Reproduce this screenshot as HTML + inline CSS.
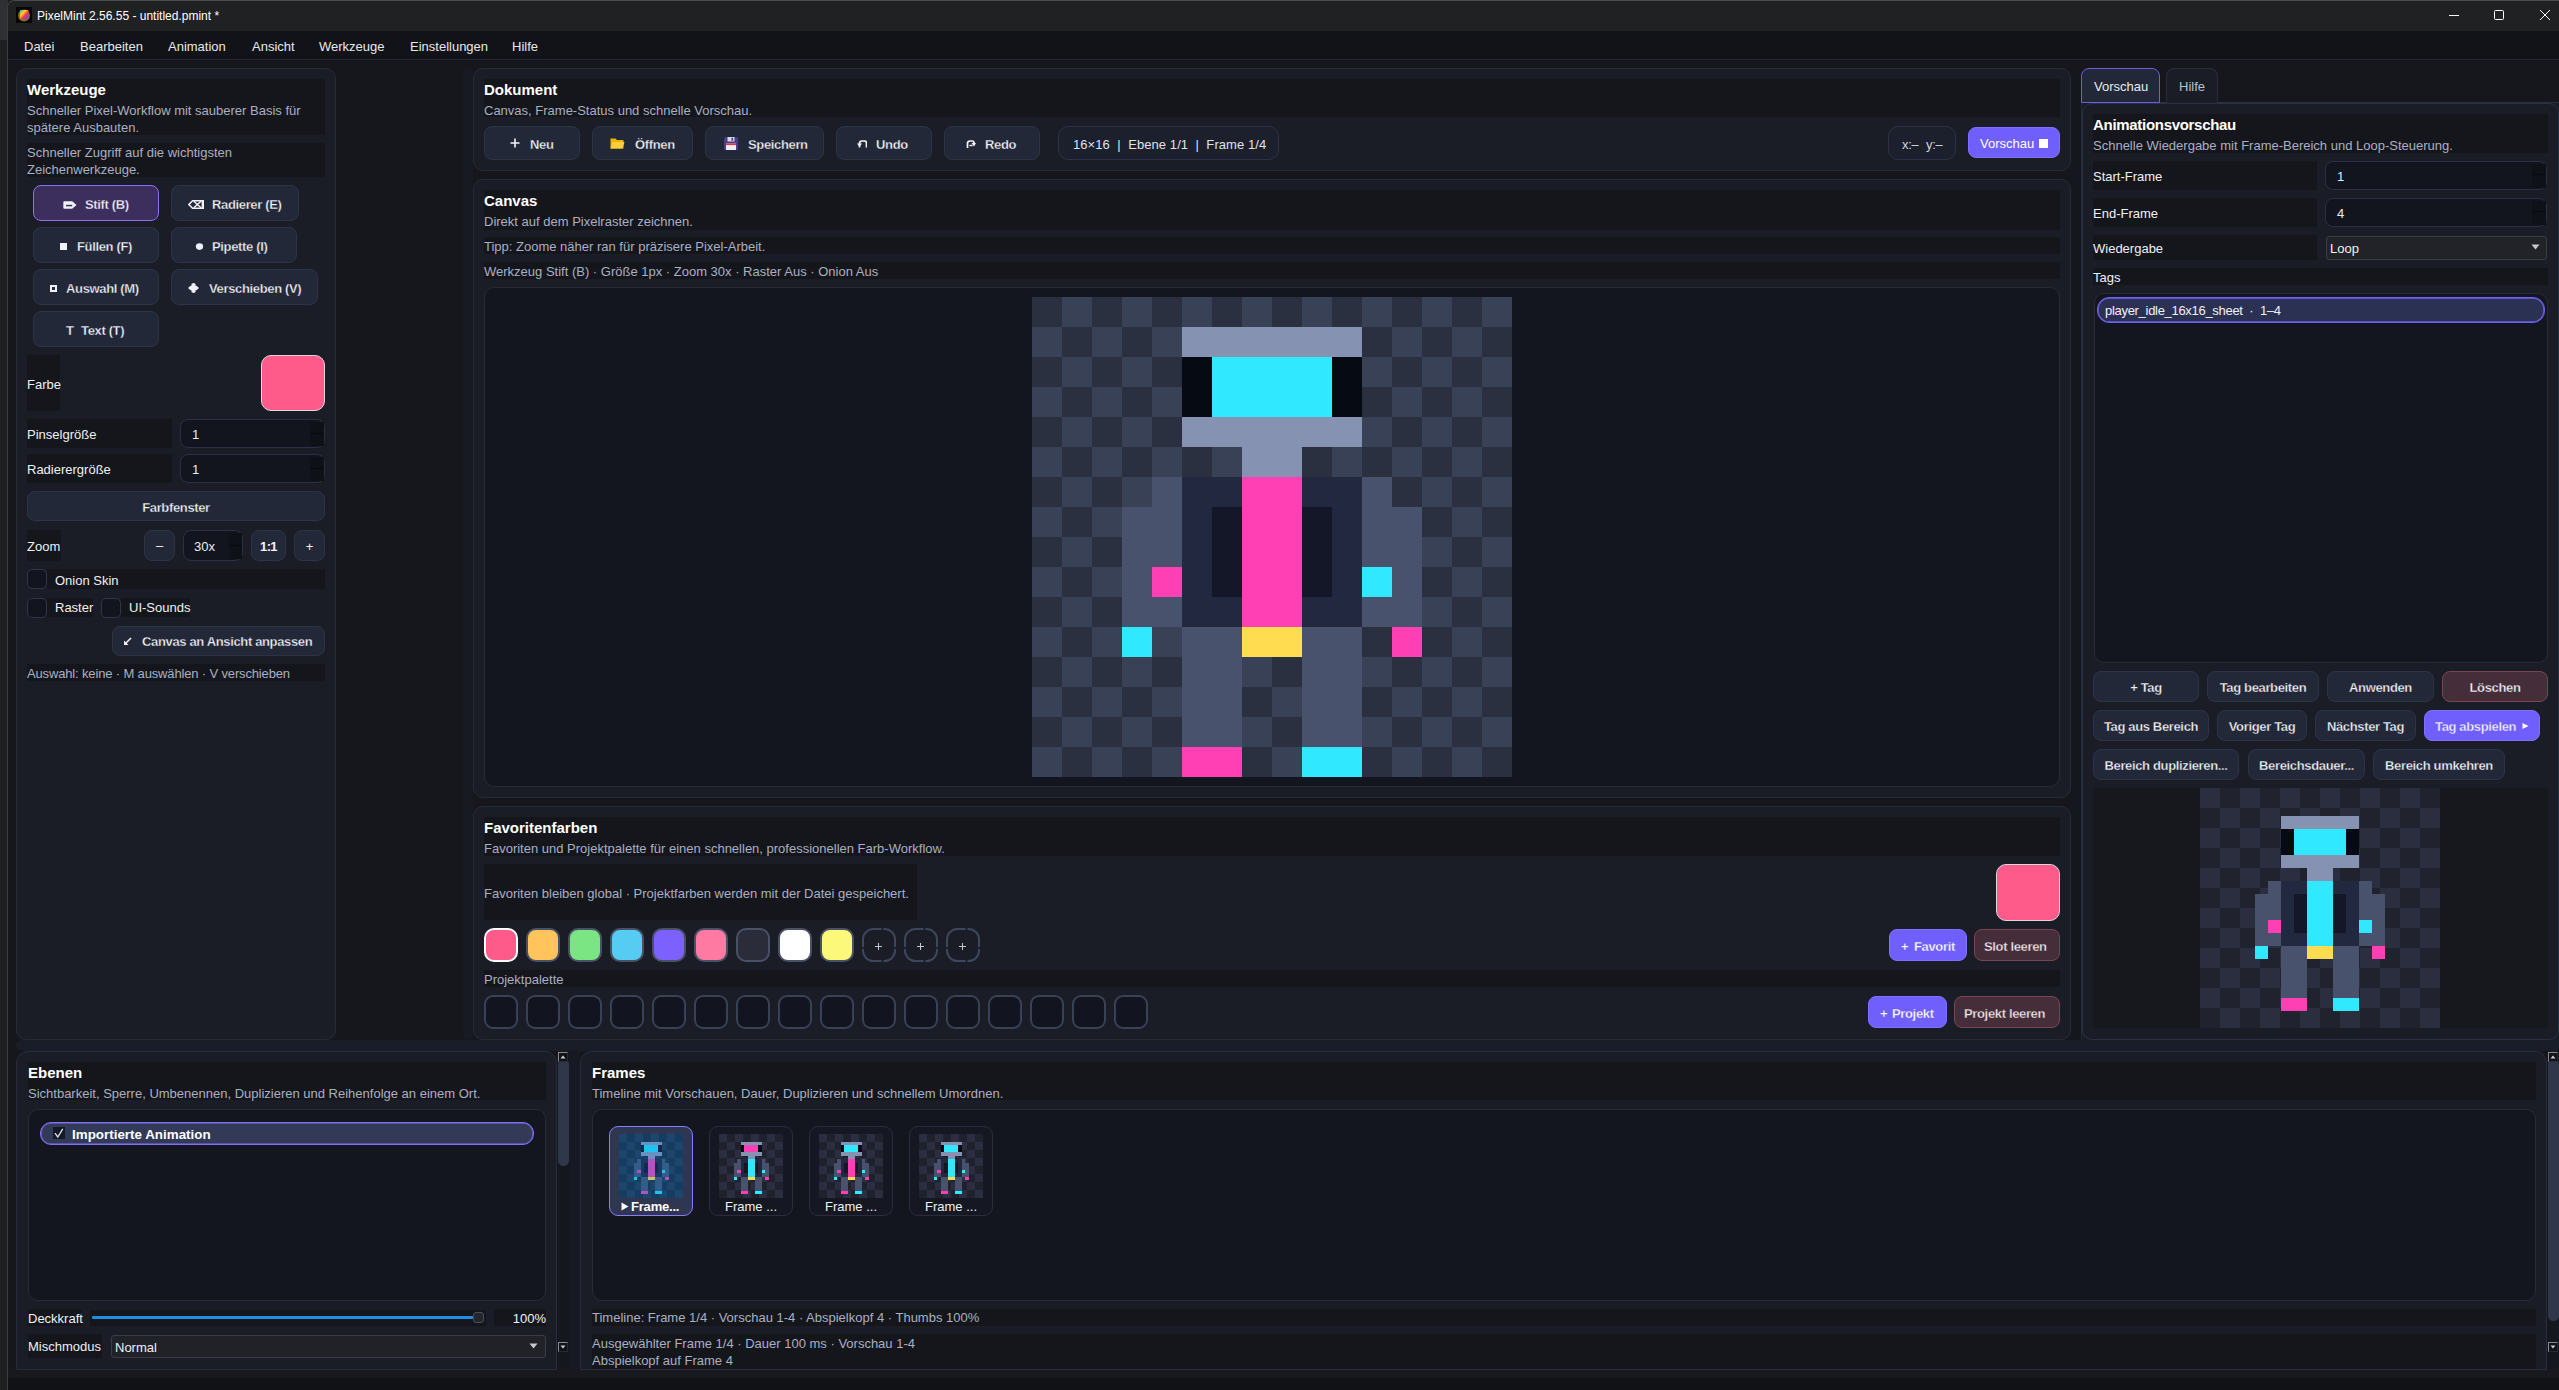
<!DOCTYPE html>
<html><head><meta charset='utf-8'><style>
*{margin:0;padding:0;box-sizing:border-box}
html,body{width:2559px;height:1390px;overflow:hidden;background:#15171c;font-family:"Liberation Sans",sans-serif}
div{position:absolute}
.t{white-space:pre}
.p{background:#1a1d26;border:1px solid #262b3a;border-radius:10px}
.s{background:#15161c}
.b{background:#232838;border:1px solid #2e3447;border-radius:8px}
.bp{background:#705ffc;border:1px solid #7f70ff;border-radius:8px}
.br{background:#452e3a;border:1px solid #7a4553;border-radius:8px}
.in{background:#12151e;border:1px solid #2b3043;border-radius:8px}
.lb{background:#13161f;border:1px solid #262b3a;border-radius:10px}
.bt{font-weight:700;letter-spacing:-0.35px;-webkit-text-stroke:0.3px var(--sb,#232838)}
.sk{-webkit-text-stroke:0.3px var(--sb,#232838)}
svg{position:absolute;display:block}
</style></head><body><div style="left:0px;top:0px;width:2559px;height:1390px;background:#1e1f21"></div>
<div style="left:0px;top:0px;width:8px;height:40px;background:#2e3033"></div>
<div style="left:7px;top:0px;width:2552px;height:1390px;background:#15171c;border-left:1px solid #3c3d40;border-top:1px solid #4a4b4f;border-top-left-radius:8px;overflow:hidden"><div style="left:0;top:0;width:2559px;height:30px;background:#1f2123"></div></div>
<svg style="left:16px;top:7px" width="16" height="16" viewBox="0 0 16 16"><rect width="16" height="16" fill="#050505"/><defs><linearGradient id="ig" x1="0" y1="0" x2="1" y2="1"><stop offset="0" stop-color="#2aa8ff"/><stop offset="0.35" stop-color="#ffd400"/><stop offset="0.6" stop-color="#ff2a6a"/><stop offset="1" stop-color="#3a5bff"/></linearGradient></defs><circle cx="8" cy="8.5" r="6" fill="#c89a20" opacity="0.7"/><rect x="4" y="3" width="8.5" height="9" rx="1" fill="url(#ig)"/></svg>
<div class="t" style="left:37px;top:10.34px;font-size:12px;line-height:12px;font-weight:400;color:#ffffff;">PixelMint 2.56.55 - untitled.pmint *</div>
<svg style="left:2440px;top:6px" width="119" height="20" viewBox="0 0 119 20"><line x1="9" y1="9.5" x2="19" y2="9.5" stroke="#fff" stroke-width="1"/><rect x="54.5" y="4.5" width="9" height="9" rx="1" fill="none" stroke="#fff" stroke-width="1"/><line x1="100" y1="4" x2="110" y2="14" stroke="#fff" stroke-width="1"/><line x1="110" y1="4" x2="100" y2="14" stroke="#fff" stroke-width="1"/></svg>
<div style="left:8px;top:31px;width:2551px;height:28px;background:#111318"></div>
<div style="left:8px;top:59px;width:2551px;height:1px;background:#222736"></div>
<div class="t" style="left:24px;top:40.00px;font-size:13px;line-height:13px;font-weight:400;color:#e6e8ee;">Datei</div>
<div class="t" style="left:80px;top:40.00px;font-size:13px;line-height:13px;font-weight:400;color:#e6e8ee;">Bearbeiten</div>
<div class="t" style="left:168px;top:40.00px;font-size:13px;line-height:13px;font-weight:400;color:#e6e8ee;">Animation</div>
<div class="t" style="left:252px;top:40.00px;font-size:13px;line-height:13px;font-weight:400;color:#e6e8ee;">Ansicht</div>
<div class="t" style="left:319px;top:40.00px;font-size:13px;line-height:13px;font-weight:400;color:#e6e8ee;">Werkzeuge</div>
<div class="t" style="left:410px;top:40.00px;font-size:13px;line-height:13px;font-weight:400;color:#e6e8ee;">Einstellungen</div>
<div class="t" style="left:512px;top:40.00px;font-size:13px;line-height:13px;font-weight:400;color:#e6e8ee;">Hilfe</div>
<div class="p" style="left:16px;top:68px;width:320px;height:972px;"></div>
<div style="left:463px;top:68px;width:10px;height:972px;background:#171a22;border-radius:5px"></div>
<div class="s" style="left:27px;top:79px;width:298px;height:56px;"></div>
<div class="t" style="left:27px;top:82.30px;font-size:15px;line-height:15px;font-weight:700;color:#ffffff;">Werkzeuge</div>
<div class="t" style="left:27px;top:104.00px;font-size:13px;line-height:13px;font-weight:400;color:#a9b0c2;">Schneller Pixel-Workflow mit sauberer Basis für</div>
<div class="t" style="left:27px;top:121.00px;font-size:13px;line-height:13px;font-weight:400;color:#a9b0c2;">spätere Ausbauten.</div>
<div class="s" style="left:27px;top:143px;width:298px;height:34px;"></div>
<div class="t" style="left:27px;top:146.00px;font-size:13px;line-height:13px;font-weight:400;color:#a9b0c2;">Schneller Zugriff auf die wichtigsten</div>
<div class="t" style="left:27px;top:163.00px;font-size:13px;line-height:13px;font-weight:400;color:#a9b0c2;">Zeichenwerkzeuge.</div>
<div style="left:33px;top:185px;width:126px;height:36px;background:#3c2f5e;border:1px solid #8c70f2;border-radius:8px"></div>
<div class="b" style="left:171px;top:185px;width:128px;height:36px;"></div>
<div class="b" style="left:33px;top:227px;width:126px;height:36px;"></div>
<div class="b" style="left:171px;top:227px;width:126px;height:36px;"></div>
<div class="b" style="left:33px;top:269px;width:126px;height:36px;"></div>
<div class="b" style="left:171px;top:269px;width:147px;height:36px;"></div>
<div class="b" style="left:33px;top:311px;width:126px;height:36px;"></div>
<div class="t bt" style="left:85px;top:198.00px;font-size:13px;line-height:13px;font-weight:700;color:#f4f4fa;--sb:#3c2f5e">Stift (B)</div>
<svg style="left:63px;top:201px" width="14" height="8" viewBox="0 0 14 8"><path d="M1.5 0.3h7.7l4.3 3.7l-4.3 3.7h-7.7q-1.2 0-1.2-1.2v-5q0-1.2 1.2-1.2z" fill="#f0f0f8"/><rect x="3" y="3.8" width="6.2" height="1.5" fill="#3c2f5e"/></svg>
<div class="t bt" style="left:212px;top:198.00px;font-size:13px;line-height:13px;font-weight:700;color:#f4f4fa;">Radierer (E)</div>
<svg style="left:188px;top:200px" width="16" height="9" viewBox="0 0 16 9"><path d="M4.6 0.75H15.2V8.25H4.6L0.9 4.5Z" fill="none" stroke="#f0f0f8" stroke-width="1.5"/><path d="M5.8 1.2L13 7.8M13 1.2L5.8 7.8" stroke="#f0f0f8" stroke-width="1.5"/><rect x="13.6" y="0" width="2.4" height="9" fill="#f0f0f8"/></svg>
<div class="t bt" style="left:77px;top:240.00px;font-size:13px;line-height:13px;font-weight:700;color:#f4f4fa;">Füllen (F)</div>
<div style="left:60px;top:243px;width:7px;height:7px;background:#f0f0f8"></div>
<div class="t bt" style="left:212px;top:240.00px;font-size:13px;line-height:13px;font-weight:700;color:#f4f4fa;">Pipette (I)</div>
<svg style="left:195px;top:242px" width="9" height="9" viewBox="0 0 9 9"><ellipse cx="4.5" cy="4.6" rx="3.6" ry="3.3" fill="#f0f0f8"/></svg>
<div class="t bt" style="left:66px;top:282.00px;font-size:13px;line-height:13px;font-weight:700;color:#f4f4fa;">Auswahl (M)</div>
<div style="left:50px;top:285px;width:7px;height:7px;border:2px solid #f0f0f8"></div>
<div class="t bt" style="left:209px;top:282.00px;font-size:13px;line-height:13px;font-weight:700;color:#f4f4fa;">Verschieben (V)</div>
<svg style="left:188px;top:283px" width="11" height="10" viewBox="0 0 11 10"><path d="M0 5L2.5 2.8H3.5V0.8L5.5 0L7.5 0.8V2.8H8.5L11 5L8.5 7.2H7.5V9.2L5.5 10L3.5 9.2V7.2H2.5Z" fill="#f0f0f8"/></svg>
<div class="t bt" style="left:81px;top:324.00px;font-size:13px;line-height:13px;font-weight:700;color:#f4f4fa;">Text (T)</div>
<div class="t bt" style="left:66px;top:324.00px;font-size:13px;line-height:13px;font-weight:700;color:#f4f4fa;">T</div>
<div class="s" style="left:27px;top:355px;width:33px;height:56px;"></div>
<div class="t" style="left:27px;top:378.00px;font-size:13px;line-height:13px;font-weight:400;color:#eef0f5;">Farbe</div>
<div style="left:261px;top:355px;width:64px;height:56px;background:#ff5b8a;border:1px solid #d8d8de;border-radius:10px"></div>
<div class="s" style="left:27px;top:419px;width:145px;height:29px;"></div>
<div class="t" style="left:27px;top:428.00px;font-size:13px;line-height:13px;font-weight:400;color:#eef0f5;">Pinselgröße</div>
<div class="in" style="left:180px;top:419px;width:145px;height:29px;"></div>
<div style="left:310px;top:422px;width:14px;height:24px;background:#0e1118"></div>
<div style="left:310px;top:433px;width:14px;height:1px;background:#07090d"></div>
<div class="t" style="left:192px;top:428.00px;font-size:13px;line-height:13px;font-weight:400;color:#e8ebf2;">1</div>
<div class="s" style="left:27px;top:454px;width:145px;height:29px;"></div>
<div class="t" style="left:27px;top:463.00px;font-size:13px;line-height:13px;font-weight:400;color:#eef0f5;">Radierergröße</div>
<div class="in" style="left:180px;top:454px;width:145px;height:29px;"></div>
<div style="left:310px;top:457px;width:14px;height:24px;background:#0e1118"></div>
<div style="left:310px;top:468px;width:14px;height:1px;background:#07090d"></div>
<div class="t" style="left:192px;top:463.00px;font-size:13px;line-height:13px;font-weight:400;color:#e8ebf2;">1</div>
<div class="b" style="left:27px;top:491px;width:298px;height:30px;"></div>
<div class="t" style="left:27px;width:298px;text-align:center;top:501.00px;font-size:13px;line-height:13px;font-weight:700;color:#f4f4fa;letter-spacing:-0.35px;-webkit-text-stroke:0.3px #232838">Farbfenster</div>
<div class="s" style="left:27px;top:530px;width:34px;height:31px;"></div>
<div class="t" style="left:27px;top:540.00px;font-size:13px;line-height:13px;font-weight:400;color:#eef0f5;">Zoom</div>
<div class="b" style="left:144px;top:530px;width:31px;height:31px;"></div>
<div class="t" style="left:144px;width:31px;text-align:center;top:539.00px;font-size:13px;line-height:13px;font-weight:400;color:#f4f4fa;">–</div>
<div class="in" style="left:183px;top:530px;width:60px;height:31px;"></div>
<div style="left:229px;top:533px;width:13px;height:26px;background:#0e1118"></div>
<div style="left:229px;top:545px;width:13px;height:1px;background:#07090d"></div>
<div class="t" style="left:194px;top:540.00px;font-size:13px;line-height:13px;font-weight:400;color:#e8ebf2;">30x</div>
<div class="b" style="left:251px;top:530px;width:35px;height:31px;"></div>
<div class="t" style="left:251px;width:35px;text-align:center;top:540.00px;font-size:13px;line-height:13px;font-weight:700;color:#f4f4fa;letter-spacing:-0.6px">1:1</div>
<div class="b" style="left:294px;top:530px;width:31px;height:31px;"></div>
<div class="t" style="left:294px;width:31px;text-align:center;top:540.00px;font-size:13px;line-height:13px;font-weight:400;color:#f4f4fa;">+</div>
<div class="s" style="left:47px;top:569px;width:278px;height:20px;"></div>
<div style="left:27px;top:569px;width:20px;height:20px;background:#12151e;border:1px solid #30364a;border-radius:5px"></div>
<div class="t" style="left:55px;top:574.00px;font-size:13px;line-height:13px;font-weight:400;color:#eef0f5;">Onion Skin</div>
<div class="s" style="left:47px;top:598px;width:46px;height:19px;"></div>
<div style="left:27px;top:598px;width:20px;height:20px;background:#12151e;border:1px solid #30364a;border-radius:5px"></div>
<div class="t" style="left:55px;top:601.00px;font-size:13px;line-height:13px;font-weight:400;color:#eef0f5;">Raster</div>
<div class="s" style="left:121px;top:598px;width:69px;height:19px;"></div>
<div style="left:101px;top:598px;width:20px;height:20px;background:#12151e;border:1px solid #30364a;border-radius:5px"></div>
<div class="t" style="left:129px;top:601.00px;font-size:13px;line-height:13px;font-weight:400;color:#eef0f5;">UI-Sounds</div>
<div class="b" style="left:112px;top:626px;width:213px;height:30px;"></div>
<div class="t bt" style="left:142px;top:635.00px;font-size:13px;line-height:13px;font-weight:700;color:#f4f4fa;">Canvas an Ansicht anpassen</div>
<svg style="left:123px;top:637px" width="9" height="9" viewBox="0 0 9 9"><path d="M8 1L2.5 6.5" stroke="#f0f0f8" stroke-width="1.6"/><path d="M1 3.5v4.5h4.5z" fill="#f0f0f8"/></svg>
<div class="s" style="left:27px;top:664px;width:298px;height:17px;"></div>
<div class="t" style="left:27px;top:667.00px;font-size:13px;line-height:13px;font-weight:400;color:#a9b0c2;letter-spacing:-0.15px">Auswahl: keine · M auswählen · V verschieben</div>
<div class="p" style="left:473px;top:68px;width:1598px;height:103px;"></div>
<div class="s" style="left:484px;top:79px;width:1576px;height:38px;"></div>
<div class="t" style="left:484px;top:82.30px;font-size:15px;line-height:15px;font-weight:700;color:#ffffff;">Dokument</div>
<div class="t" style="left:484px;top:104.00px;font-size:13px;line-height:13px;font-weight:400;color:#a9b0c2;">Canvas, Frame-Status und schnelle Vorschau.</div>
<div class="b" style="left:484px;top:126px;width:96px;height:34px;"></div>
<div class="t bt" style="left:530px;top:138.00px;font-size:13px;line-height:13px;font-weight:700;color:#f4f4fa;">Neu</div>
<div class="b" style="left:592px;top:126px;width:101px;height:34px;"></div>
<div class="t bt" style="left:635px;top:138.00px;font-size:13px;line-height:13px;font-weight:700;color:#f4f4fa;">Öffnen</div>
<div class="b" style="left:705px;top:126px;width:119px;height:34px;"></div>
<div class="t bt" style="left:748px;top:138.00px;font-size:13px;line-height:13px;font-weight:700;color:#f4f4fa;">Speichern</div>
<div class="b" style="left:836px;top:126px;width:96px;height:34px;"></div>
<div class="t bt" style="left:876px;top:138.00px;font-size:13px;line-height:13px;font-weight:700;color:#f4f4fa;">Undo</div>
<div class="b" style="left:944px;top:126px;width:96px;height:34px;"></div>
<div class="t bt" style="left:985px;top:138.00px;font-size:13px;line-height:13px;font-weight:700;color:#f4f4fa;">Redo</div>
<svg style="left:510px;top:138px" width="10" height="10" viewBox="0 0 10 10"><path d="M5 0.5v9M0.5 5h9" stroke="#f4f4fa" stroke-width="1.6"/></svg>
<svg style="left:610px;top:137px" width="15" height="12" viewBox="0 0 15 12"><path d="M0.5 1.5h5l1.5 1.5h6.5v8.5h-13z" fill="#f0b400"/><path d="M2.5 5h12l-2 6.5h-12z" fill="#ffcd3c"/></svg>
<svg style="left:724px;top:137px" width="14" height="13" viewBox="0 0 14 13"><rect x="0" y="0" width="14" height="13" rx="1.5" fill="#4a3d86"/><rect x="3.5" y="0" width="7" height="4.5" fill="#d6d6e4"/><rect x="7.5" y="0.8" width="1.6" height="3" fill="#4a3d86"/><rect x="2" y="6.5" width="10" height="6.5" fill="#ececf4"/><rect x="2" y="6.5" width="10" height="1.6" fill="#e5323f"/></svg>
<svg style="left:857px;top:139px" width="10" height="10" viewBox="0 0 10 10"><path d="M2.5 8.5V4.5Q2.5 2 5 2H7.5Q9.5 2 9.5 4.5V8.5" fill="none" stroke="#f4f4fa" stroke-width="1.7"/><path d="M0 4.5L2.5 7.8L5 4.5z" fill="#f4f4fa"/></svg>
<svg style="left:966px;top:139px" width="10" height="10" viewBox="0 0 10 10"><path d="M1.5 9V4.5Q1.5 2 4 2H6Q8 2 8 4" fill="none" stroke="#f4f4fa" stroke-width="1.7"/><path d="M5.5 4L8 7.5L10 4z" fill="#f4f4fa"/><path d="M3.5 6.5h3" stroke="#f4f4fa" stroke-width="1.4"/></svg>
<div style="left:1058px;top:126px;width:221px;height:34px;background:#1c1f2c;border:1px solid #2d3246;border-radius:10px"></div>
<div class="t" style="left:1073px;top:138.00px;font-size:13px;line-height:13px;font-weight:400;color:#dfe3ec;letter-spacing:0.08px">16×16  |  Ebene 1/1  |  Frame 1/4</div>
<div style="left:1888px;top:126px;width:68px;height:34px;background:#1c1f2c;border:1px solid #2d3246;border-radius:10px"></div>
<div class="t" style="left:1902px;top:138.00px;font-size:13px;line-height:13px;font-weight:400;color:#d0d5e0;letter-spacing:-0.3px">x:–</div>
<div class="t" style="left:1926px;top:138.00px;font-size:13px;line-height:13px;font-weight:400;color:#d0d5e0;letter-spacing:-0.3px">y:–</div>
<div class="bp" style="left:1968px;top:127px;width:92px;height:31px;"></div>
<div class="t" style="left:1980px;top:137.00px;font-size:13px;line-height:13px;font-weight:400;color:#ffffff;">Vorschau</div>
<div style="left:2039px;top:139px;width:9px;height:9px;background:#ffffff"></div>
<div class="p" style="left:473px;top:179px;width:1598px;height:619px;"></div>
<div class="s" style="left:484px;top:190px;width:1576px;height:40px;"></div>
<div class="t" style="left:484px;top:193.30px;font-size:15px;line-height:15px;font-weight:700;color:#ffffff;">Canvas</div>
<div class="t" style="left:484px;top:215.00px;font-size:13px;line-height:13px;font-weight:400;color:#a9b0c2;">Direkt auf dem Pixelraster zeichnen.</div>
<div class="s" style="left:484px;top:237px;width:1576px;height:17px;"></div>
<div class="t" style="left:484px;top:240.00px;font-size:13px;line-height:13px;font-weight:400;color:#a9b0c2;">Tipp: Zoome näher ran für präzisere Pixel-Arbeit.</div>
<div class="s" style="left:484px;top:262px;width:1576px;height:17px;"></div>
<div class="t" style="left:484px;top:265.00px;font-size:13px;line-height:13px;font-weight:400;color:#a9b0c2;">Werkzeug Stift (B) · Größe 1px · Zoom 30x · Raster Aus · Onion Aus</div>
<div style="left:484px;top:287px;width:1576px;height:500px;background:#13161f;border:1px solid #262b3a;border-radius:10px"></div>
<div class="p" style="left:473px;top:806px;width:1598px;height:234px;"></div>
<div class="s" style="left:484px;top:817px;width:1576px;height:39px;"></div>
<div class="t" style="left:484px;top:820.30px;font-size:15px;line-height:15px;font-weight:700;color:#ffffff;">Favoritenfarben</div>
<div class="t" style="left:484px;top:842.00px;font-size:13px;line-height:13px;font-weight:400;color:#a9b0c2;">Favoriten und Projektpalette für einen schnellen, professionellen Farb-Workflow.</div>
<div class="s" style="left:484px;top:864px;width:433px;height:56px;"></div>
<div class="t" style="left:484px;top:887.00px;font-size:13px;line-height:13px;font-weight:400;color:#a9b0c2;">Favoriten bleiben global · Projektfarben werden mit der Datei gespeichert.</div>
<div style="left:1996px;top:864px;width:64px;height:57px;background:#ff5b8a;border:1px solid #d8d8de;border-radius:10px"></div>
<div style="left:484px;top:928px;width:34px;height:34px;background:#ff5b8a;border:2px solid #ffffff;border-radius:10px"></div>
<div style="left:526px;top:928px;width:34px;height:34px;background:#ffc45c;border:2px solid #4a5166;border-radius:10px"></div>
<div style="left:568px;top:928px;width:34px;height:34px;background:#7ae582;border:2px solid #4a5166;border-radius:10px"></div>
<div style="left:610px;top:928px;width:34px;height:34px;background:#56ccf2;border:2px solid #4a5166;border-radius:10px"></div>
<div style="left:652px;top:928px;width:34px;height:34px;background:#7d61ff;border:2px solid #4a5166;border-radius:10px"></div>
<div style="left:694px;top:928px;width:34px;height:34px;background:#ff7aa2;border:2px solid #4a5166;border-radius:10px"></div>
<div style="left:736px;top:928px;width:34px;height:34px;background:#2a2d39;border:2px solid #4a5166;border-radius:10px"></div>
<div style="left:778px;top:928px;width:34px;height:34px;background:#ffffff;border:2px solid #4a5166;border-radius:10px"></div>
<div style="left:820px;top:928px;width:34px;height:34px;background:#fcf97a;border:2px solid #4a5166;border-radius:10px"></div>
<svg style="left:862px;top:928px" width="34" height="34" viewBox="0 0 34 34"><rect x="1" y="1" width="32" height="32" rx="10.5" fill="none" stroke="#3d465c" stroke-width="2"/><rect x="19.6" y="0" width="1.8" height="3" fill="#1a1d26"/><rect x="19.6" y="31" width="1.8" height="3" fill="#1a1d26"/><rect x="0" y="19.2" width="3" height="1.8" fill="#1a1d26"/><rect x="31" y="19.2" width="3" height="1.8" fill="#1a1d26"/><path d="M13 18.5h7M16.5 15v7" stroke="#c2c7d4" stroke-width="1"/></svg>
<svg style="left:904px;top:928px" width="34" height="34" viewBox="0 0 34 34"><rect x="1" y="1" width="32" height="32" rx="10.5" fill="none" stroke="#3d465c" stroke-width="2"/><rect x="19.6" y="0" width="1.8" height="3" fill="#1a1d26"/><rect x="19.6" y="31" width="1.8" height="3" fill="#1a1d26"/><rect x="0" y="19.2" width="3" height="1.8" fill="#1a1d26"/><rect x="31" y="19.2" width="3" height="1.8" fill="#1a1d26"/><path d="M13 18.5h7M16.5 15v7" stroke="#c2c7d4" stroke-width="1"/></svg>
<svg style="left:946px;top:928px" width="34" height="34" viewBox="0 0 34 34"><rect x="1" y="1" width="32" height="32" rx="10.5" fill="none" stroke="#3d465c" stroke-width="2"/><rect x="19.6" y="0" width="1.8" height="3" fill="#1a1d26"/><rect x="19.6" y="31" width="1.8" height="3" fill="#1a1d26"/><rect x="0" y="19.2" width="3" height="1.8" fill="#1a1d26"/><rect x="31" y="19.2" width="3" height="1.8" fill="#1a1d26"/><path d="M13 18.5h7M16.5 15v7" stroke="#c2c7d4" stroke-width="1"/></svg>
<div class="bp" style="left:1889px;top:929px;width:78px;height:32px;"></div>
<div class="t bt" style="left:1901px;top:940.00px;font-size:13px;line-height:13px;font-weight:700;color:#ffffff;--sb:#705ffc">+</div>
<div class="t bt" style="left:1914px;top:940.00px;font-size:13px;line-height:13px;font-weight:700;color:#ffffff;--sb:#705ffc">Favorit</div>
<div class="br" style="left:1974px;top:929px;width:86px;height:32px;"></div>
<div class="t bt" style="left:1984px;top:940.00px;font-size:13px;line-height:13px;font-weight:700;color:#f4e8ec;--sb:#452e3a">Slot leeren</div>
<div class="s" style="left:484px;top:970px;width:1576px;height:17px;"></div>
<div class="t" style="left:484px;top:973.00px;font-size:13px;line-height:13px;font-weight:400;color:#a9b0c2;">Projektpalette</div>
<div style="left:484px;top:995px;width:34px;height:34px;background:#12151f;border:2px solid #394159;border-radius:9px"></div>
<div style="left:526px;top:995px;width:34px;height:34px;background:#12151f;border:2px solid #394159;border-radius:9px"></div>
<div style="left:568px;top:995px;width:34px;height:34px;background:#12151f;border:2px solid #394159;border-radius:9px"></div>
<div style="left:610px;top:995px;width:34px;height:34px;background:#12151f;border:2px solid #394159;border-radius:9px"></div>
<div style="left:652px;top:995px;width:34px;height:34px;background:#12151f;border:2px solid #394159;border-radius:9px"></div>
<div style="left:694px;top:995px;width:34px;height:34px;background:#12151f;border:2px solid #394159;border-radius:9px"></div>
<div style="left:736px;top:995px;width:34px;height:34px;background:#12151f;border:2px solid #394159;border-radius:9px"></div>
<div style="left:778px;top:995px;width:34px;height:34px;background:#12151f;border:2px solid #394159;border-radius:9px"></div>
<div style="left:820px;top:995px;width:34px;height:34px;background:#12151f;border:2px solid #394159;border-radius:9px"></div>
<div style="left:862px;top:995px;width:34px;height:34px;background:#12151f;border:2px solid #394159;border-radius:9px"></div>
<div style="left:904px;top:995px;width:34px;height:34px;background:#12151f;border:2px solid #394159;border-radius:9px"></div>
<div style="left:946px;top:995px;width:34px;height:34px;background:#12151f;border:2px solid #394159;border-radius:9px"></div>
<div style="left:988px;top:995px;width:34px;height:34px;background:#12151f;border:2px solid #394159;border-radius:9px"></div>
<div style="left:1030px;top:995px;width:34px;height:34px;background:#12151f;border:2px solid #394159;border-radius:9px"></div>
<div style="left:1072px;top:995px;width:34px;height:34px;background:#12151f;border:2px solid #394159;border-radius:9px"></div>
<div style="left:1114px;top:995px;width:34px;height:34px;background:#12151f;border:2px solid #394159;border-radius:9px"></div>
<div class="bp" style="left:1868px;top:996px;width:79px;height:32px;"></div>
<div class="t bt" style="left:1880px;top:1007.00px;font-size:13px;line-height:13px;font-weight:700;color:#ffffff;--sb:#705ffc">+</div>
<div class="t bt" style="left:1892px;top:1007.00px;font-size:13px;line-height:13px;font-weight:700;color:#ffffff;--sb:#705ffc">Projekt</div>
<div class="br" style="left:1954px;top:996px;width:106px;height:32px;"></div>
<div class="t bt" style="left:1964px;top:1007.00px;font-size:13px;line-height:13px;font-weight:700;color:#f4e8ec;--sb:#452e3a">Projekt leeren</div>
<div style="left:1032px;top:297px;width:480px;height:480px;background-color:#2a3040;background-image:conic-gradient(#394157 25%,#2a3040 25% 50%,#394157 50% 75%,#2a3040 75%);background-size:60px 60px"></div>
<svg style="left:1032px;top:297px;" width="480" height="480" viewBox="0 0 16 16" shape-rendering="crispEdges"><rect x="5" y="1" width="6" height="1" fill="#8592b1"/><rect x="5" y="2" width="1" height="1" fill="#060a12"/><rect x="6" y="2" width="4" height="1" fill="#30e8ff"/><rect x="10" y="2" width="1" height="1" fill="#060a12"/><rect x="5" y="3" width="1" height="1" fill="#060a12"/><rect x="6" y="3" width="4" height="1" fill="#30e8ff"/><rect x="10" y="3" width="1" height="1" fill="#060a12"/><rect x="5" y="4" width="6" height="1" fill="#8592b1"/><rect x="7" y="5" width="2" height="1" fill="#8592b1"/><rect x="4" y="6" width="1" height="1" fill="#48526c"/><rect x="5" y="6" width="2" height="1" fill="#22283f"/><rect x="7" y="6" width="2" height="1" fill="#ff40b4"/><rect x="9" y="6" width="2" height="1" fill="#22283f"/><rect x="11" y="6" width="1" height="1" fill="#48526c"/><rect x="3" y="7" width="2" height="1" fill="#48526c"/><rect x="5" y="7" width="1" height="1" fill="#22283f"/><rect x="6" y="7" width="1" height="1" fill="#131728"/><rect x="7" y="7" width="2" height="1" fill="#ff40b4"/><rect x="9" y="7" width="1" height="1" fill="#131728"/><rect x="10" y="7" width="1" height="1" fill="#22283f"/><rect x="11" y="7" width="2" height="1" fill="#48526c"/><rect x="3" y="8" width="2" height="1" fill="#48526c"/><rect x="5" y="8" width="1" height="1" fill="#22283f"/><rect x="6" y="8" width="1" height="1" fill="#131728"/><rect x="7" y="8" width="2" height="1" fill="#ff40b4"/><rect x="9" y="8" width="1" height="1" fill="#131728"/><rect x="10" y="8" width="1" height="1" fill="#22283f"/><rect x="11" y="8" width="2" height="1" fill="#48526c"/><rect x="3" y="9" width="1" height="1" fill="#48526c"/><rect x="4" y="9" width="1" height="1" fill="#ff40b4"/><rect x="5" y="9" width="1" height="1" fill="#22283f"/><rect x="6" y="9" width="1" height="1" fill="#131728"/><rect x="7" y="9" width="2" height="1" fill="#ff40b4"/><rect x="9" y="9" width="1" height="1" fill="#131728"/><rect x="10" y="9" width="1" height="1" fill="#22283f"/><rect x="11" y="9" width="1" height="1" fill="#30e8ff"/><rect x="12" y="9" width="1" height="1" fill="#48526c"/><rect x="3" y="10" width="2" height="1" fill="#48526c"/><rect x="5" y="10" width="2" height="1" fill="#22283f"/><rect x="7" y="10" width="2" height="1" fill="#ff40b4"/><rect x="9" y="10" width="2" height="1" fill="#22283f"/><rect x="11" y="10" width="2" height="1" fill="#48526c"/><rect x="3" y="11" width="1" height="1" fill="#30e8ff"/><rect x="5" y="11" width="2" height="1" fill="#48526c"/><rect x="7" y="11" width="2" height="1" fill="#ffdc50"/><rect x="9" y="11" width="2" height="1" fill="#48526c"/><rect x="12" y="11" width="1" height="1" fill="#ff40b4"/><rect x="5" y="12" width="2" height="1" fill="#48526c"/><rect x="9" y="12" width="2" height="1" fill="#48526c"/><rect x="5" y="13" width="2" height="1" fill="#48526c"/><rect x="9" y="13" width="2" height="1" fill="#48526c"/><rect x="5" y="14" width="2" height="1" fill="#48526c"/><rect x="9" y="14" width="2" height="1" fill="#48526c"/><rect x="5" y="15" width="2" height="1" fill="#ff40b4"/><rect x="9" y="15" width="2" height="1" fill="#30e8ff"/></svg>
<div style="left:2071px;top:68px;width:10px;height:972px;background:#14171e;border-radius:4px"></div>
<div style="left:2081px;top:102px;width:478px;height:938px;background:#1a1d26;border-left:1px solid #262b3a;border-top:1px solid #2b3045"></div>
<div style="left:2082px;top:103px;width:477px;height:937px;background:#1a1d26;border:1px solid #2b3045;border-radius:10px"></div>
<div style="left:2081px;top:68px;width:79px;height:35px;background:#232838;border:1px solid #6c5ce7;border-radius:8px 8px 0 0"></div>
<div class="t" style="left:2094px;top:80.00px;font-size:13px;line-height:13px;font-weight:400;color:#e8ebf2;">Vorschau</div>
<div style="left:2166px;top:68px;width:52px;height:35px;background:#1a1d26;border:1px solid #282c3b;border-bottom:none;border-radius:8px 8px 0 0"></div>
<div class="t" style="left:2179px;top:80.00px;font-size:13px;line-height:13px;font-weight:400;color:#b9c0d0;">Hilfe</div>
<div class="s" style="left:2093px;top:114px;width:455px;height:39px;"></div>
<div class="t" style="left:2093px;top:117.30px;font-size:15px;line-height:15px;font-weight:700;color:#ffffff;letter-spacing:-0.3px">Animationsvorschau</div>
<div class="t" style="left:2093px;top:139.00px;font-size:13px;line-height:13px;font-weight:400;color:#a9b0c2;">Schnelle Wiedergabe mit Frame-Bereich und Loop-Steuerung.</div>
<div class="s" style="left:2093px;top:161px;width:224px;height:29px;"></div>
<div class="t" style="left:2093px;top:170.00px;font-size:13px;line-height:13px;font-weight:400;color:#eef0f5;">Start-Frame</div>
<div class="in" style="left:2325px;top:161px;width:222px;height:29px;"></div>
<div style="left:2532px;top:164px;width:14px;height:24px;background:#0e1118"></div>
<div style="left:2532px;top:174px;width:14px;height:1px;background:#07090d"></div>
<div class="t" style="left:2337px;top:170.00px;font-size:13px;line-height:13px;font-weight:400;color:#e8ebf2;">1</div>
<div class="s" style="left:2093px;top:198px;width:224px;height:29px;"></div>
<div class="t" style="left:2093px;top:207.00px;font-size:13px;line-height:13px;font-weight:400;color:#eef0f5;">End-Frame</div>
<div class="in" style="left:2325px;top:198px;width:222px;height:29px;"></div>
<div style="left:2532px;top:201px;width:14px;height:24px;background:#0e1118"></div>
<div style="left:2532px;top:211px;width:14px;height:1px;background:#07090d"></div>
<div class="t" style="left:2337px;top:207.00px;font-size:13px;line-height:13px;font-weight:400;color:#e8ebf2;">4</div>
<div class="s" style="left:2093px;top:235px;width:224px;height:25px;"></div>
<div class="t" style="left:2093px;top:242.00px;font-size:13px;line-height:13px;font-weight:400;color:#eef0f5;">Wiedergabe</div>
<div style="left:2326px;top:236px;width:221px;height:24px;background:#212329;border:1px solid #3c3d42;border-radius:3px"></div>
<div class="t" style="left:2330px;top:242.00px;font-size:13px;line-height:13px;font-weight:400;color:#eef0f5;">Loop</div>
<svg style="left:2531px;top:244px" width="9" height="6" viewBox="0 0 9 6"><path d="M0.5 0.5h8l-4 5z" fill="#c8c8cc"/></svg>
<div class="s" style="left:2093px;top:268px;width:455px;height:17px;"></div>
<div class="t" style="left:2093px;top:271.00px;font-size:13px;line-height:13px;font-weight:400;color:#eef0f5;">Tags</div>
<div class="lb" style="left:2094px;top:293px;width:454px;height:370px;"></div>
<div style="left:2097px;top:297px;width:448px;height:26px;background:#2b3152;border:1px solid #7060f2;box-shadow:inset 0 0 0 0.7px #7060f2;border-radius:12px"></div>
<div class="t" style="left:2105px;top:304.00px;font-size:13px;line-height:13px;font-weight:400;color:#f0f2f8;letter-spacing:-0.3px">player_idle_16x16_sheet  ·  1–4</div>
<div class="b" style="left:2093px;top:671px;width:106px;height:31px;"></div>
<div class="t" style="left:2093px;width:106px;text-align:center;top:681.00px;font-size:13px;line-height:13px;font-weight:700;color:#f4f4fa;letter-spacing:-0.35px;-webkit-text-stroke:0.3px #232838">+ Tag</div>
<div class="b" style="left:2207px;top:671px;width:112px;height:31px;"></div>
<div class="t" style="left:2207px;width:112px;text-align:center;top:681.00px;font-size:13px;line-height:13px;font-weight:700;color:#f4f4fa;letter-spacing:-0.35px;-webkit-text-stroke:0.3px #232838">Tag bearbeiten</div>
<div class="b" style="left:2327px;top:671px;width:107px;height:31px;"></div>
<div class="t" style="left:2327px;width:107px;text-align:center;top:681.00px;font-size:13px;line-height:13px;font-weight:700;color:#f4f4fa;letter-spacing:-0.35px;-webkit-text-stroke:0.3px #232838">Anwenden</div>
<div class="br" style="left:2442px;top:671px;width:106px;height:31px;"></div>
<div class="t" style="left:2442px;width:106px;text-align:center;top:681.00px;font-size:13px;line-height:13px;font-weight:700;color:#f4f4fa;letter-spacing:-0.35px;-webkit-text-stroke:0.3px #452e3a">Löschen</div>
<div class="b" style="left:2093px;top:710px;width:116px;height:31px;"></div>
<div class="t" style="left:2093px;width:116px;text-align:center;top:720.00px;font-size:13px;line-height:13px;font-weight:700;color:#f4f4fa;letter-spacing:-0.35px;-webkit-text-stroke:0.3px #232838">Tag aus Bereich</div>
<div class="b" style="left:2217px;top:710px;width:90px;height:31px;"></div>
<div class="t" style="left:2217px;width:90px;text-align:center;top:720.00px;font-size:13px;line-height:13px;font-weight:700;color:#f4f4fa;letter-spacing:-0.35px;-webkit-text-stroke:0.3px #232838">Voriger Tag</div>
<div class="b" style="left:2315px;top:710px;width:101px;height:31px;"></div>
<div class="t" style="left:2315px;width:101px;text-align:center;top:720.00px;font-size:13px;line-height:13px;font-weight:700;color:#f4f4fa;letter-spacing:-0.35px;-webkit-text-stroke:0.3px #232838">Nächster Tag</div>
<div class="bp" style="left:2424px;top:710px;width:116px;height:31px;"></div>
<div class="t" style="left:2435px;top:720.00px;font-size:13px;line-height:13px;font-weight:700;color:#f4f4fa;letter-spacing:-0.35px;-webkit-text-stroke:0.3px #705ffc">Tag abspielen</div>
<svg style="left:2522px;top:723px" width="7" height="6" viewBox="0 0 7 6"><path d="M0.5 0L6.5 3L0.5 6z" fill="#ffffff"/></svg>
<div class="b" style="left:2093px;top:749px;width:146px;height:31px;"></div>
<div class="t" style="left:2093px;width:146px;text-align:center;top:759.00px;font-size:13px;line-height:13px;font-weight:700;color:#f4f4fa;letter-spacing:-0.35px;-webkit-text-stroke:0.3px #232838">Bereich duplizieren...</div>
<div class="b" style="left:2248px;top:749px;width:117px;height:31px;"></div>
<div class="t" style="left:2248px;width:117px;text-align:center;top:759.00px;font-size:13px;line-height:13px;font-weight:700;color:#f4f4fa;letter-spacing:-0.35px;-webkit-text-stroke:0.3px #232838">Bereichsdauer...</div>
<div class="b" style="left:2373px;top:749px;width:132px;height:31px;"></div>
<div class="t" style="left:2373px;width:132px;text-align:center;top:759.00px;font-size:13px;line-height:13px;font-weight:700;color:#f4f4fa;letter-spacing:-0.35px;-webkit-text-stroke:0.3px #232838">Bereich umkehren</div>
<div style="left:2093px;top:788px;width:455px;height:240px;background:#17181d"></div>
<div style="left:2200px;top:788px;width:240px;height:240px;background-color:#2a2e3f;background-image:conic-gradient(#20232d 25%,#2a2e3f 25% 50%,#20232d 50% 75%,#2a2e3f 75%);background-size:40px 40px"></div>
<svg style="left:2216px;top:803px;" width="208" height="208" viewBox="0 0 16 16" shape-rendering="crispEdges"><rect x="5" y="1" width="6" height="1" fill="#8592b1"/><rect x="5" y="2" width="1" height="1" fill="#060a12"/><rect x="6" y="2" width="4" height="1" fill="#30e8ff"/><rect x="10" y="2" width="1" height="1" fill="#060a12"/><rect x="5" y="3" width="1" height="1" fill="#060a12"/><rect x="6" y="3" width="4" height="1" fill="#30e8ff"/><rect x="10" y="3" width="1" height="1" fill="#060a12"/><rect x="5" y="4" width="6" height="1" fill="#8592b1"/><rect x="7" y="5" width="2" height="1" fill="#8592b1"/><rect x="4" y="6" width="1" height="1" fill="#48526c"/><rect x="5" y="6" width="2" height="1" fill="#22283f"/><rect x="7" y="6" width="2" height="1" fill="#30e8ff"/><rect x="9" y="6" width="2" height="1" fill="#22283f"/><rect x="11" y="6" width="1" height="1" fill="#48526c"/><rect x="3" y="7" width="2" height="1" fill="#48526c"/><rect x="5" y="7" width="1" height="1" fill="#22283f"/><rect x="6" y="7" width="1" height="1" fill="#131728"/><rect x="7" y="7" width="2" height="1" fill="#30e8ff"/><rect x="9" y="7" width="1" height="1" fill="#131728"/><rect x="10" y="7" width="1" height="1" fill="#22283f"/><rect x="11" y="7" width="2" height="1" fill="#48526c"/><rect x="3" y="8" width="2" height="1" fill="#48526c"/><rect x="5" y="8" width="1" height="1" fill="#22283f"/><rect x="6" y="8" width="1" height="1" fill="#131728"/><rect x="7" y="8" width="2" height="1" fill="#30e8ff"/><rect x="9" y="8" width="1" height="1" fill="#131728"/><rect x="10" y="8" width="1" height="1" fill="#22283f"/><rect x="11" y="8" width="2" height="1" fill="#48526c"/><rect x="3" y="9" width="1" height="1" fill="#48526c"/><rect x="4" y="9" width="1" height="1" fill="#ff40b4"/><rect x="5" y="9" width="1" height="1" fill="#22283f"/><rect x="6" y="9" width="1" height="1" fill="#131728"/><rect x="7" y="9" width="2" height="1" fill="#30e8ff"/><rect x="9" y="9" width="1" height="1" fill="#131728"/><rect x="10" y="9" width="1" height="1" fill="#22283f"/><rect x="11" y="9" width="1" height="1" fill="#30e8ff"/><rect x="12" y="9" width="1" height="1" fill="#48526c"/><rect x="3" y="10" width="2" height="1" fill="#48526c"/><rect x="5" y="10" width="2" height="1" fill="#22283f"/><rect x="7" y="10" width="2" height="1" fill="#30e8ff"/><rect x="9" y="10" width="2" height="1" fill="#22283f"/><rect x="11" y="10" width="2" height="1" fill="#48526c"/><rect x="3" y="11" width="1" height="1" fill="#30e8ff"/><rect x="5" y="11" width="2" height="1" fill="#48526c"/><rect x="7" y="11" width="2" height="1" fill="#ffdc50"/><rect x="9" y="11" width="2" height="1" fill="#48526c"/><rect x="12" y="11" width="1" height="1" fill="#ff40b4"/><rect x="5" y="12" width="2" height="1" fill="#48526c"/><rect x="9" y="12" width="2" height="1" fill="#48526c"/><rect x="5" y="13" width="2" height="1" fill="#48526c"/><rect x="9" y="13" width="2" height="1" fill="#48526c"/><rect x="5" y="14" width="2" height="1" fill="#48526c"/><rect x="9" y="14" width="2" height="1" fill="#48526c"/><rect x="5" y="15" width="2" height="1" fill="#ff40b4"/><rect x="9" y="15" width="2" height="1" fill="#30e8ff"/></svg>
<div style="left:16px;top:1040px;width:2554px;height:11px;background:#191d27;border-radius:5px"></div>
<div style="left:8px;top:1369px;width:2551px;height:9px;background:#17191e"></div>
<div style="left:8px;top:1378px;width:2551px;height:12px;background:#111216"></div>
<div style="left:16px;top:1051px;width:541px;height:319px;background:#1a1d26;border:1px solid #282d3e;border-radius:12px 12px 0 0"></div>
<div class="s" style="left:28px;top:1062px;width:518px;height:38px;"></div>
<div class="t" style="left:28px;top:1065.30px;font-size:15px;line-height:15px;font-weight:700;color:#ffffff;">Ebenen</div>
<div class="t" style="left:28px;top:1087.00px;font-size:13px;line-height:13px;font-weight:400;color:#a9b0c2;">Sichtbarkeit, Sperre, Umbenennen, Duplizieren und Reihenfolge an einem Ort.</div>
<div class="lb" style="left:28px;top:1109px;width:518px;height:192px;"></div>
<div style="left:40px;top:1122px;width:494px;height:23px;background:#323a57;border:1px solid #7f70f4;box-shadow:inset 0 0 0 0.6px #7f70f4;border-radius:11px"></div>
<div style="left:53px;top:1127px;width:12px;height:12px;background:#141825"></div>
<svg style="left:54px;top:1128px" width="10" height="10" viewBox="0 0 10 10"><path d="M1 5.2L3.8 9L8.8 0.8" fill="none" stroke="#d8d9e0" stroke-width="1.4"/></svg>
<div class="t" style="left:72px;top:1127.66px;font-size:13.4px;line-height:13.4px;font-weight:700;color:#ffffff;">Importierte Animation</div>
<div class="s" style="left:28px;top:1309px;width:54px;height:17px;"></div>
<div class="t" style="left:28px;top:1312.00px;font-size:13px;line-height:13px;font-weight:400;color:#eef0f5;">Deckkraft</div>
<div style="left:90px;top:1310px;width:396px;height:16px;background:#14161c"></div>
<div style="left:92px;top:1316px;width:381px;height:3px;background:#1e8fe6;border-radius:1px"></div>
<div style="left:473px;top:1312px;width:11px;height:11px;background:#23262d;border:1px solid #4a4e58;border-radius:3px"></div>
<div class="s" style="left:494px;top:1309px;width:52px;height:17px;"></div>
<div class="t" style="right:2013px;top:1312.00px;font-size:13px;line-height:13px;font-weight:400;color:#eef0f5;">100%</div>
<div class="s" style="left:28px;top:1334px;width:74px;height:24px;"></div>
<div class="t" style="left:28px;top:1340.00px;font-size:13px;line-height:13px;font-weight:400;color:#eef0f5;">Mischmodus</div>
<div style="left:111px;top:1335px;width:435px;height:23px;background:#202228;border:1px solid #3c3d42;border-radius:3px"></div>
<div class="t" style="left:115px;top:1341.00px;font-size:13px;line-height:13px;font-weight:400;color:#eef0f5;">Normal</div>
<svg style="left:529px;top:1343px" width="9" height="6" viewBox="0 0 9 6"><path d="M0.5 0.5h8l-4 5z" fill="#c8c8cc"/></svg>
<div style="left:557px;top:1051px;width:12px;height:318px;background:#15171e"></div>
<div style="left:558px;top:1059px;width:11px;height:107px;background:#30374a;border-radius:6px"></div>
<div style="left:558px;top:1052px;width:10px;height:10px;background:#10131a;border:1px solid #2a2b2e;border-top-color:#8a8b8f;border-left-color:#8a8b8f"></div>
<svg style="left:560px;top:1055px" width="6" height="4" viewBox="0 0 6 4"><path d="M0.5 3.5h5l-2.5-3z" fill="#cfd0d4"/></svg>
<div style="left:558px;top:1342px;width:10px;height:10px;background:#10131a;border:1px solid #2a2b2e;border-top-color:#8a8b8f;border-left-color:#8a8b8f"></div>
<svg style="left:560px;top:1345px" width="6" height="4" viewBox="0 0 6 4"><path d="M0.5 0.5h5l-2.5 3z" fill="#cfd0d4"/></svg>
<div style="left:569px;top:1051px;width:11px;height:318px;background:#161922"></div>
<div style="left:580px;top:1051px;width:1967px;height:319px;background:#1a1d26;border:1px solid #282d3e;border-radius:12px 12px 0 0"></div>
<div class="s" style="left:592px;top:1062px;width:1944px;height:38px;"></div>
<div class="t" style="left:592px;top:1065.30px;font-size:15px;line-height:15px;font-weight:700;color:#ffffff;">Frames</div>
<div class="t" style="left:592px;top:1087.00px;font-size:13px;line-height:13px;font-weight:400;color:#a9b0c2;">Timeline mit Vorschauen, Dauer, Duplizieren und schnellem Umordnen.</div>
<div class="lb" style="left:592px;top:1109px;width:1944px;height:192px;"></div>
<div style="left:609px;top:1126px;width:84px;height:90px;background:#2f3652;border:1px solid #8a7aff;border-radius:9px"></div>
<div style="left:619px;top:1134px;width:64px;height:64px;background-color:#1c466b;background-image:conic-gradient(#173c61 25%,#1c466b 25% 50%,#173c61 50% 75%,#1c466b 75%);background-size:16px 16px"></div>
<svg style="left:623px;top:1138px;" width="56" height="56" viewBox="0 0 16 16" shape-rendering="crispEdges"><rect x="5" y="1" width="6" height="1" fill="#6a92c0"/><rect x="5" y="2" width="1" height="1" fill="#0c2a4a"/><rect x="6" y="2" width="4" height="1" fill="#1ec3ee"/><rect x="10" y="2" width="1" height="1" fill="#0c2a4a"/><rect x="5" y="3" width="1" height="1" fill="#0c2a4a"/><rect x="6" y="3" width="4" height="1" fill="#1ec3ee"/><rect x="10" y="3" width="1" height="1" fill="#0c2a4a"/><rect x="5" y="4" width="6" height="1" fill="#6a92c0"/><rect x="7" y="5" width="2" height="1" fill="#6a92c0"/><rect x="4" y="6" width="1" height="1" fill="#345c8a"/><rect x="5" y="6" width="2" height="1" fill="#1a3a66"/><rect x="7" y="6" width="2" height="1" fill="#b452be"/><rect x="9" y="6" width="2" height="1" fill="#1a3a66"/><rect x="11" y="6" width="1" height="1" fill="#345c8a"/><rect x="3" y="7" width="2" height="1" fill="#345c8a"/><rect x="5" y="7" width="1" height="1" fill="#1a3a66"/><rect x="6" y="7" width="1" height="1" fill="#0e2c52"/><rect x="7" y="7" width="2" height="1" fill="#b452be"/><rect x="9" y="7" width="1" height="1" fill="#0e2c52"/><rect x="10" y="7" width="1" height="1" fill="#1a3a66"/><rect x="11" y="7" width="2" height="1" fill="#345c8a"/><rect x="3" y="8" width="2" height="1" fill="#345c8a"/><rect x="5" y="8" width="1" height="1" fill="#1a3a66"/><rect x="6" y="8" width="1" height="1" fill="#0e2c52"/><rect x="7" y="8" width="2" height="1" fill="#b452be"/><rect x="9" y="8" width="1" height="1" fill="#0e2c52"/><rect x="10" y="8" width="1" height="1" fill="#1a3a66"/><rect x="11" y="8" width="2" height="1" fill="#345c8a"/><rect x="3" y="9" width="1" height="1" fill="#345c8a"/><rect x="4" y="9" width="1" height="1" fill="#b452be"/><rect x="5" y="9" width="1" height="1" fill="#1a3a66"/><rect x="6" y="9" width="1" height="1" fill="#0e2c52"/><rect x="7" y="9" width="2" height="1" fill="#b452be"/><rect x="9" y="9" width="1" height="1" fill="#0e2c52"/><rect x="10" y="9" width="1" height="1" fill="#1a3a66"/><rect x="11" y="9" width="1" height="1" fill="#1ec3ee"/><rect x="12" y="9" width="1" height="1" fill="#345c8a"/><rect x="3" y="10" width="2" height="1" fill="#345c8a"/><rect x="5" y="10" width="2" height="1" fill="#1a3a66"/><rect x="7" y="10" width="2" height="1" fill="#b452be"/><rect x="9" y="10" width="2" height="1" fill="#1a3a66"/><rect x="11" y="10" width="2" height="1" fill="#345c8a"/><rect x="3" y="11" width="1" height="1" fill="#1ec3ee"/><rect x="5" y="11" width="2" height="1" fill="#345c8a"/><rect x="7" y="11" width="2" height="1" fill="#c4c466"/><rect x="9" y="11" width="2" height="1" fill="#345c8a"/><rect x="12" y="11" width="1" height="1" fill="#b452be"/><rect x="5" y="12" width="2" height="1" fill="#345c8a"/><rect x="9" y="12" width="2" height="1" fill="#345c8a"/><rect x="5" y="13" width="2" height="1" fill="#345c8a"/><rect x="9" y="13" width="2" height="1" fill="#345c8a"/><rect x="5" y="14" width="2" height="1" fill="#345c8a"/><rect x="9" y="14" width="2" height="1" fill="#345c8a"/><rect x="5" y="15" width="2" height="1" fill="#b452be"/><rect x="9" y="15" width="2" height="1" fill="#1ec3ee"/></svg>
<div class="t" style="left:631px;top:1200.00px;font-size:13px;line-height:13px;font-weight:700;color:#ffffff;letter-spacing:-0.2px">Frame...</div>
<svg style="left:621px;top:1202px" width="8" height="9" viewBox="0 0 8 9"><path d="M0.5 0.5v8l7-4z" fill="#ffffff"/></svg>
<div style="left:709px;top:1126px;width:84px;height:90px;background:#151822;border:1px solid #292e3c;border-radius:9px"></div>
<div style="left:719px;top:1134px;width:64px;height:64px;background-color:#2a2e40;background-image:conic-gradient(#1f222d 25%,#2a2e40 25% 50%,#1f222d 50% 75%,#2a2e40 75%);background-size:16px 16px"></div>
<svg style="left:723px;top:1138px;" width="56" height="56" viewBox="0 0 16 16" shape-rendering="crispEdges"><rect x="5" y="1" width="6" height="1" fill="#8592b1"/><rect x="5" y="2" width="1" height="1" fill="#060a12"/><rect x="6" y="2" width="4" height="1" fill="#ff40b4"/><rect x="10" y="2" width="1" height="1" fill="#060a12"/><rect x="5" y="3" width="1" height="1" fill="#060a12"/><rect x="6" y="3" width="4" height="1" fill="#ff40b4"/><rect x="10" y="3" width="1" height="1" fill="#060a12"/><rect x="5" y="4" width="6" height="1" fill="#8592b1"/><rect x="7" y="5" width="2" height="1" fill="#8592b1"/><rect x="4" y="6" width="1" height="1" fill="#48526c"/><rect x="5" y="6" width="2" height="1" fill="#22283f"/><rect x="7" y="6" width="2" height="1" fill="#30e8ff"/><rect x="9" y="6" width="2" height="1" fill="#22283f"/><rect x="11" y="6" width="1" height="1" fill="#48526c"/><rect x="3" y="7" width="2" height="1" fill="#48526c"/><rect x="5" y="7" width="1" height="1" fill="#22283f"/><rect x="6" y="7" width="1" height="1" fill="#131728"/><rect x="7" y="7" width="2" height="1" fill="#30e8ff"/><rect x="9" y="7" width="1" height="1" fill="#131728"/><rect x="10" y="7" width="1" height="1" fill="#22283f"/><rect x="11" y="7" width="2" height="1" fill="#48526c"/><rect x="3" y="8" width="2" height="1" fill="#48526c"/><rect x="5" y="8" width="1" height="1" fill="#22283f"/><rect x="6" y="8" width="1" height="1" fill="#131728"/><rect x="7" y="8" width="2" height="1" fill="#30e8ff"/><rect x="9" y="8" width="1" height="1" fill="#131728"/><rect x="10" y="8" width="1" height="1" fill="#22283f"/><rect x="11" y="8" width="2" height="1" fill="#48526c"/><rect x="3" y="9" width="1" height="1" fill="#48526c"/><rect x="4" y="9" width="1" height="1" fill="#ff40b4"/><rect x="5" y="9" width="1" height="1" fill="#22283f"/><rect x="6" y="9" width="1" height="1" fill="#131728"/><rect x="7" y="9" width="2" height="1" fill="#30e8ff"/><rect x="9" y="9" width="1" height="1" fill="#131728"/><rect x="10" y="9" width="1" height="1" fill="#22283f"/><rect x="11" y="9" width="1" height="1" fill="#30e8ff"/><rect x="12" y="9" width="1" height="1" fill="#48526c"/><rect x="3" y="10" width="2" height="1" fill="#48526c"/><rect x="5" y="10" width="2" height="1" fill="#22283f"/><rect x="7" y="10" width="2" height="1" fill="#30e8ff"/><rect x="9" y="10" width="2" height="1" fill="#22283f"/><rect x="11" y="10" width="2" height="1" fill="#48526c"/><rect x="3" y="11" width="1" height="1" fill="#30e8ff"/><rect x="5" y="11" width="2" height="1" fill="#48526c"/><rect x="7" y="11" width="2" height="1" fill="#ffdc50"/><rect x="9" y="11" width="2" height="1" fill="#48526c"/><rect x="12" y="11" width="1" height="1" fill="#ff40b4"/><rect x="5" y="12" width="2" height="1" fill="#48526c"/><rect x="9" y="12" width="2" height="1" fill="#48526c"/><rect x="5" y="13" width="2" height="1" fill="#48526c"/><rect x="9" y="13" width="2" height="1" fill="#48526c"/><rect x="5" y="14" width="2" height="1" fill="#48526c"/><rect x="9" y="14" width="2" height="1" fill="#48526c"/><rect x="5" y="15" width="2" height="1" fill="#ff40b4"/><rect x="9" y="15" width="2" height="1" fill="#30e8ff"/></svg>
<div class="t" style="left:709px;width:84px;text-align:center;top:1200.00px;font-size:13px;line-height:13px;font-weight:400;color:#eef0f5;">Frame ...</div>
<div style="left:809px;top:1126px;width:84px;height:90px;background:#151822;border:1px solid #292e3c;border-radius:9px"></div>
<div style="left:819px;top:1134px;width:64px;height:64px;background-color:#2a2e40;background-image:conic-gradient(#1f222d 25%,#2a2e40 25% 50%,#1f222d 50% 75%,#2a2e40 75%);background-size:16px 16px"></div>
<svg style="left:823px;top:1138px;" width="56" height="56" viewBox="0 0 16 16" shape-rendering="crispEdges"><rect x="5" y="1" width="6" height="1" fill="#8592b1"/><rect x="5" y="2" width="1" height="1" fill="#060a12"/><rect x="6" y="2" width="4" height="1" fill="#30e8ff"/><rect x="10" y="2" width="1" height="1" fill="#060a12"/><rect x="5" y="3" width="1" height="1" fill="#060a12"/><rect x="6" y="3" width="4" height="1" fill="#30e8ff"/><rect x="10" y="3" width="1" height="1" fill="#060a12"/><rect x="5" y="4" width="6" height="1" fill="#8592b1"/><rect x="7" y="5" width="2" height="1" fill="#8592b1"/><rect x="4" y="6" width="1" height="1" fill="#48526c"/><rect x="5" y="6" width="2" height="1" fill="#22283f"/><rect x="7" y="6" width="2" height="1" fill="#ff40b4"/><rect x="9" y="6" width="2" height="1" fill="#22283f"/><rect x="11" y="6" width="1" height="1" fill="#48526c"/><rect x="3" y="7" width="2" height="1" fill="#48526c"/><rect x="5" y="7" width="1" height="1" fill="#22283f"/><rect x="6" y="7" width="1" height="1" fill="#131728"/><rect x="7" y="7" width="2" height="1" fill="#ff40b4"/><rect x="9" y="7" width="1" height="1" fill="#131728"/><rect x="10" y="7" width="1" height="1" fill="#22283f"/><rect x="11" y="7" width="2" height="1" fill="#48526c"/><rect x="3" y="8" width="2" height="1" fill="#48526c"/><rect x="5" y="8" width="1" height="1" fill="#22283f"/><rect x="6" y="8" width="1" height="1" fill="#131728"/><rect x="7" y="8" width="2" height="1" fill="#ff40b4"/><rect x="9" y="8" width="1" height="1" fill="#131728"/><rect x="10" y="8" width="1" height="1" fill="#22283f"/><rect x="11" y="8" width="2" height="1" fill="#48526c"/><rect x="3" y="9" width="1" height="1" fill="#48526c"/><rect x="4" y="9" width="1" height="1" fill="#ff40b4"/><rect x="5" y="9" width="1" height="1" fill="#22283f"/><rect x="6" y="9" width="1" height="1" fill="#131728"/><rect x="7" y="9" width="2" height="1" fill="#ff40b4"/><rect x="9" y="9" width="1" height="1" fill="#131728"/><rect x="10" y="9" width="1" height="1" fill="#22283f"/><rect x="11" y="9" width="1" height="1" fill="#30e8ff"/><rect x="12" y="9" width="1" height="1" fill="#48526c"/><rect x="3" y="10" width="2" height="1" fill="#48526c"/><rect x="5" y="10" width="2" height="1" fill="#22283f"/><rect x="7" y="10" width="2" height="1" fill="#ff40b4"/><rect x="9" y="10" width="2" height="1" fill="#22283f"/><rect x="11" y="10" width="2" height="1" fill="#48526c"/><rect x="3" y="11" width="1" height="1" fill="#30e8ff"/><rect x="5" y="11" width="2" height="1" fill="#48526c"/><rect x="7" y="11" width="2" height="1" fill="#ffdc50"/><rect x="9" y="11" width="2" height="1" fill="#48526c"/><rect x="12" y="11" width="1" height="1" fill="#ff40b4"/><rect x="5" y="12" width="2" height="1" fill="#48526c"/><rect x="9" y="12" width="2" height="1" fill="#48526c"/><rect x="5" y="13" width="2" height="1" fill="#48526c"/><rect x="9" y="13" width="2" height="1" fill="#48526c"/><rect x="5" y="14" width="2" height="1" fill="#48526c"/><rect x="9" y="14" width="2" height="1" fill="#48526c"/><rect x="5" y="15" width="2" height="1" fill="#ff40b4"/><rect x="9" y="15" width="2" height="1" fill="#30e8ff"/></svg>
<div class="t" style="left:809px;width:84px;text-align:center;top:1200.00px;font-size:13px;line-height:13px;font-weight:400;color:#eef0f5;">Frame ...</div>
<div style="left:909px;top:1126px;width:84px;height:90px;background:#151822;border:1px solid #292e3c;border-radius:9px"></div>
<div style="left:919px;top:1134px;width:64px;height:64px;background-color:#2a2e40;background-image:conic-gradient(#1f222d 25%,#2a2e40 25% 50%,#1f222d 50% 75%,#2a2e40 75%);background-size:16px 16px"></div>
<svg style="left:923px;top:1138px;" width="56" height="56" viewBox="0 0 16 16" shape-rendering="crispEdges"><rect x="5" y="1" width="6" height="1" fill="#8592b1"/><rect x="5" y="2" width="1" height="1" fill="#060a12"/><rect x="6" y="2" width="4" height="1" fill="#30e8ff"/><rect x="10" y="2" width="1" height="1" fill="#060a12"/><rect x="5" y="3" width="1" height="1" fill="#060a12"/><rect x="6" y="3" width="4" height="1" fill="#30e8ff"/><rect x="10" y="3" width="1" height="1" fill="#060a12"/><rect x="5" y="4" width="6" height="1" fill="#8592b1"/><rect x="7" y="5" width="2" height="1" fill="#8592b1"/><rect x="4" y="6" width="1" height="1" fill="#48526c"/><rect x="5" y="6" width="2" height="1" fill="#22283f"/><rect x="7" y="6" width="2" height="1" fill="#30e8ff"/><rect x="9" y="6" width="2" height="1" fill="#22283f"/><rect x="11" y="6" width="1" height="1" fill="#48526c"/><rect x="3" y="7" width="2" height="1" fill="#48526c"/><rect x="5" y="7" width="1" height="1" fill="#22283f"/><rect x="6" y="7" width="1" height="1" fill="#131728"/><rect x="7" y="7" width="2" height="1" fill="#30e8ff"/><rect x="9" y="7" width="1" height="1" fill="#131728"/><rect x="10" y="7" width="1" height="1" fill="#22283f"/><rect x="11" y="7" width="2" height="1" fill="#48526c"/><rect x="3" y="8" width="2" height="1" fill="#48526c"/><rect x="5" y="8" width="1" height="1" fill="#22283f"/><rect x="6" y="8" width="1" height="1" fill="#131728"/><rect x="7" y="8" width="2" height="1" fill="#30e8ff"/><rect x="9" y="8" width="1" height="1" fill="#131728"/><rect x="10" y="8" width="1" height="1" fill="#22283f"/><rect x="11" y="8" width="2" height="1" fill="#48526c"/><rect x="3" y="9" width="1" height="1" fill="#48526c"/><rect x="4" y="9" width="1" height="1" fill="#ff40b4"/><rect x="5" y="9" width="1" height="1" fill="#22283f"/><rect x="6" y="9" width="1" height="1" fill="#131728"/><rect x="7" y="9" width="2" height="1" fill="#30e8ff"/><rect x="9" y="9" width="1" height="1" fill="#131728"/><rect x="10" y="9" width="1" height="1" fill="#22283f"/><rect x="11" y="9" width="1" height="1" fill="#30e8ff"/><rect x="12" y="9" width="1" height="1" fill="#48526c"/><rect x="3" y="10" width="2" height="1" fill="#48526c"/><rect x="5" y="10" width="2" height="1" fill="#22283f"/><rect x="7" y="10" width="2" height="1" fill="#30e8ff"/><rect x="9" y="10" width="2" height="1" fill="#22283f"/><rect x="11" y="10" width="2" height="1" fill="#48526c"/><rect x="3" y="11" width="1" height="1" fill="#30e8ff"/><rect x="5" y="11" width="2" height="1" fill="#48526c"/><rect x="7" y="11" width="2" height="1" fill="#ffdc50"/><rect x="9" y="11" width="2" height="1" fill="#48526c"/><rect x="12" y="11" width="1" height="1" fill="#ff40b4"/><rect x="5" y="12" width="2" height="1" fill="#48526c"/><rect x="9" y="12" width="2" height="1" fill="#48526c"/><rect x="5" y="13" width="2" height="1" fill="#48526c"/><rect x="9" y="13" width="2" height="1" fill="#48526c"/><rect x="5" y="14" width="2" height="1" fill="#48526c"/><rect x="9" y="14" width="2" height="1" fill="#48526c"/><rect x="5" y="15" width="2" height="1" fill="#ff40b4"/><rect x="9" y="15" width="2" height="1" fill="#30e8ff"/></svg>
<div class="t" style="left:909px;width:84px;text-align:center;top:1200.00px;font-size:13px;line-height:13px;font-weight:400;color:#eef0f5;">Frame ...</div>
<div class="s" style="left:592px;top:1309px;width:1944px;height:17px;"></div>
<div class="t" style="left:592px;top:1311.00px;font-size:13px;line-height:13px;font-weight:400;color:#a9b0c2;">Timeline: Frame 1/4 · Vorschau 1-4 · Abspielkopf 4 · Thumbs 100%</div>
<div class="s" style="left:592px;top:1334px;width:1944px;height:35px;"></div>
<div class="t" style="left:592px;top:1337.00px;font-size:13px;line-height:13px;font-weight:400;color:#a9b0c2;">Ausgewählter Frame 1/4 · Dauer 100 ms · Vorschau 1-4</div>
<div class="t" style="left:592px;top:1354.00px;font-size:13px;line-height:13px;font-weight:400;color:#a9b0c2;">Abspielkopf auf Frame 4</div>
<div style="left:2547px;top:1051px;width:12px;height:318px;background:#15171e"></div>
<div style="left:2548px;top:1059px;width:11px;height:262px;background:#30374a;border-radius:6px"></div>
<div style="left:2548px;top:1052px;width:10px;height:10px;background:#10131a;border:1px solid #2a2b2e;border-top-color:#8a8b8f;border-left-color:#8a8b8f"></div>
<svg style="left:2550px;top:1055px" width="6" height="4" viewBox="0 0 6 4"><path d="M0.5 3.5h5l-2.5-3z" fill="#cfd0d4"/></svg>
<div style="left:2548px;top:1342px;width:10px;height:10px;background:#10131a;border:1px solid #2a2b2e;border-top-color:#8a8b8f;border-left-color:#8a8b8f"></div>
<svg style="left:2550px;top:1345px" width="6" height="4" viewBox="0 0 6 4"><path d="M0.5 0.5h5l-2.5 3z" fill="#cfd0d4"/></svg></body></html>
